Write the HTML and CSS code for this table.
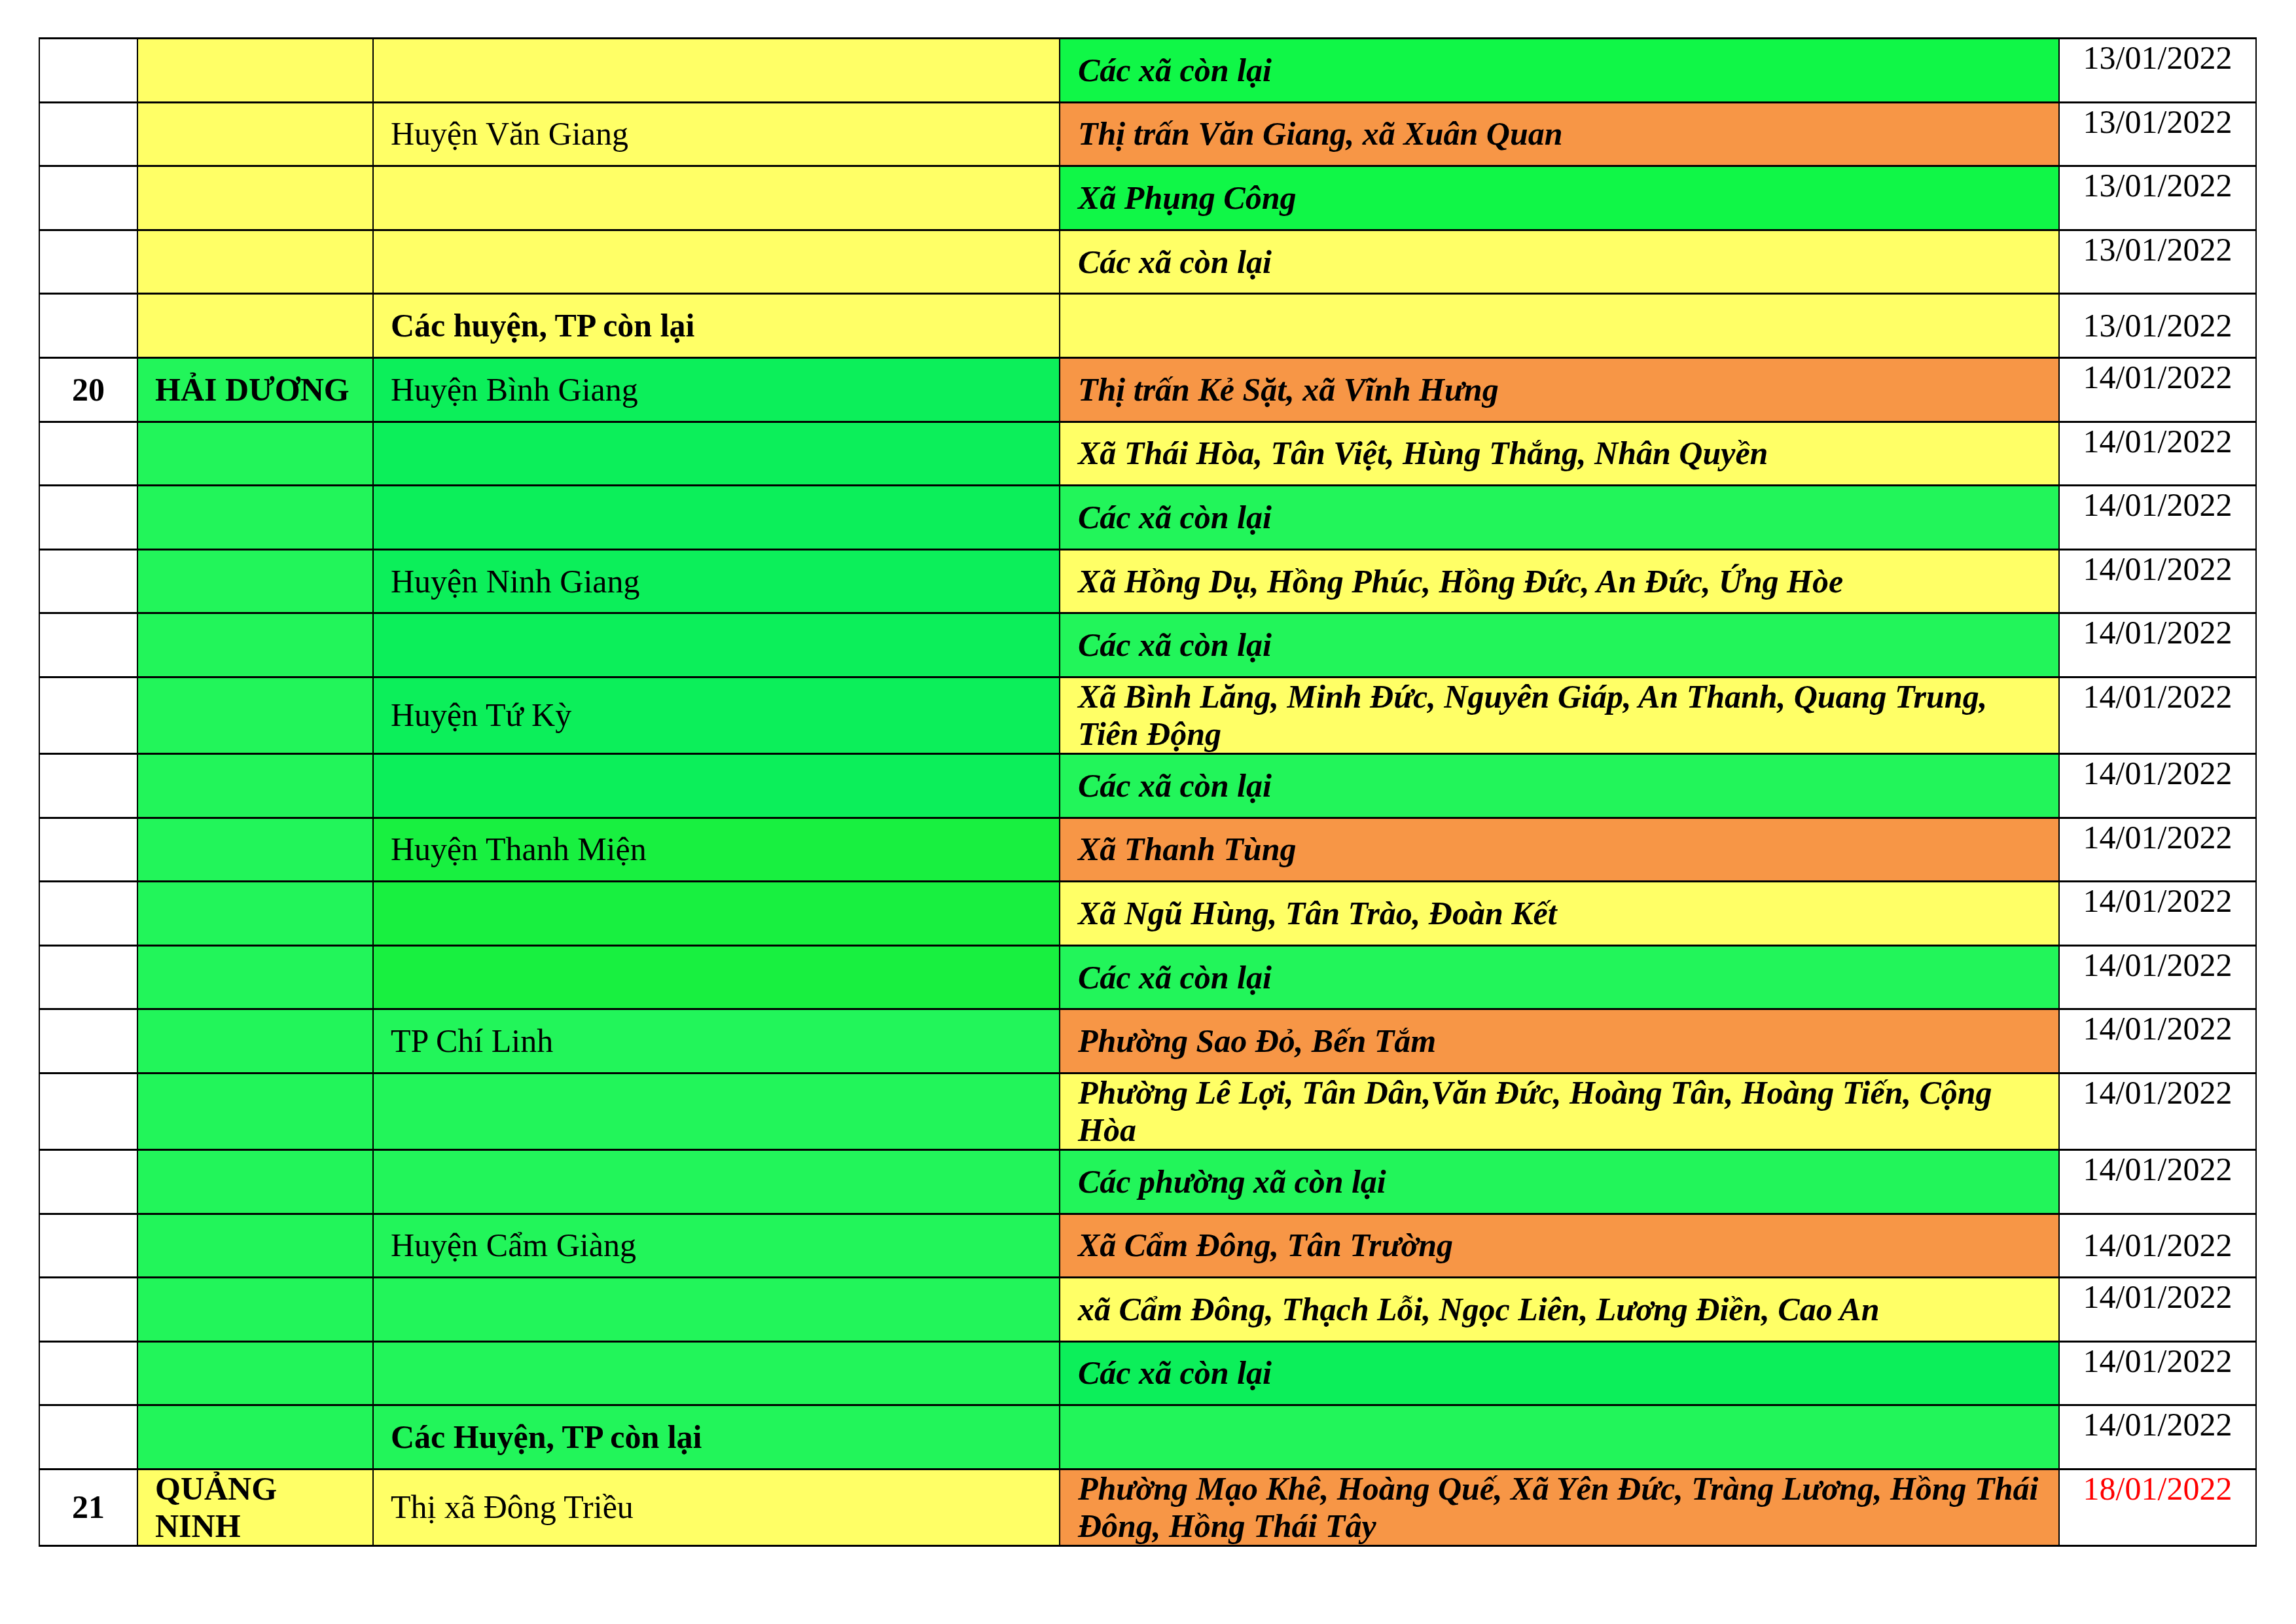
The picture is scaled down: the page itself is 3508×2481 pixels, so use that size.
FILE: index.html
```html
<!DOCTYPE html>
<html lang="vi">
<head>
<meta charset="utf-8">
<title>Danh sách</title>
<link rel="stylesheet" href="styles.css">
</head>
<body>
<table class="sheet">
<colgroup>
<col class="c-num"><col class="c-prov"><col class="c-dist"><col class="c-comm"><col class="c-date">
</colgroup>
<tbody>
<tr><td class="num"></td><td class="prov y"></td><td class="dist y"></td><td class="comm gb">Các xã còn lại</td><td class="date">13/01/2022</td></tr>
<tr><td class="num"></td><td class="prov y"></td><td class="dist y">Huyện Văn Giang</td><td class="comm o">Thị trấn Văn Giang, xã Xuân Quan</td><td class="date">13/01/2022</td></tr>
<tr><td class="num"></td><td class="prov y"></td><td class="dist y"></td><td class="comm gb">Xã Phụng Công</td><td class="date">13/01/2022</td></tr>
<tr><td class="num"></td><td class="prov y"></td><td class="dist y"></td><td class="comm y">Các xã còn lại</td><td class="date">13/01/2022</td></tr>
<tr><td class="num"></td><td class="prov y"></td><td class="dist y strong">Các huyện, TP còn lại</td><td class="comm y"></td><td class="date mid">13/01/2022</td></tr>
<tr><td class="num strong">20</td><td class="prov g strong">HẢI DƯƠNG</td><td class="dist gc">Huyện Bình Giang</td><td class="comm o">Thị trấn Kẻ Sặt, xã Vĩnh Hưng</td><td class="date">14/01/2022</td></tr>
<tr><td class="num"></td><td class="prov g"></td><td class="dist gc"></td><td class="comm y">Xã Thái Hòa, Tân Việt, Hùng Thắng, Nhân Quyền</td><td class="date">14/01/2022</td></tr>
<tr><td class="num"></td><td class="prov g"></td><td class="dist gc"></td><td class="comm g">Các xã còn lại</td><td class="date">14/01/2022</td></tr>
<tr><td class="num"></td><td class="prov g"></td><td class="dist gc">Huyện Ninh Giang</td><td class="comm y">Xã Hồng Dụ, Hồng Phúc, Hồng Đức, An Đức, Ứng Hòe</td><td class="date">14/01/2022</td></tr>
<tr><td class="num"></td><td class="prov g"></td><td class="dist gc"></td><td class="comm g">Các xã còn lại</td><td class="date">14/01/2022</td></tr>
<tr class="auto"><td class="num"></td><td class="prov g"></td><td class="dist gc">Huyện Tứ Kỳ</td><td class="comm y">Xã Bình Lăng, Minh Đức, Nguyên Giáp, An Thanh, Quang Trung, Tiên Động</td><td class="date">14/01/2022</td></tr>
<tr><td class="num"></td><td class="prov g"></td><td class="dist gc"></td><td class="comm g">Các xã còn lại</td><td class="date">14/01/2022</td></tr>
<tr><td class="num"></td><td class="prov g"></td><td class="dist gw">Huyện Thanh Miện</td><td class="comm o">Xã Thanh Tùng</td><td class="date">14/01/2022</td></tr>
<tr><td class="num"></td><td class="prov g"></td><td class="dist gw"></td><td class="comm y">Xã Ngũ Hùng, Tân Trào, Đoàn Kết</td><td class="date">14/01/2022</td></tr>
<tr><td class="num"></td><td class="prov g"></td><td class="dist gw"></td><td class="comm g">Các xã còn lại</td><td class="date">14/01/2022</td></tr>
<tr><td class="num"></td><td class="prov g"></td><td class="dist g">TP Chí Linh</td><td class="comm o">Phường Sao Đỏ, Bến Tắm</td><td class="date">14/01/2022</td></tr>
<tr class="auto"><td class="num"></td><td class="prov g"></td><td class="dist g"></td><td class="comm y">Phường Lê Lợi, Tân Dân,Văn Đức, Hoàng Tân, Hoàng Tiến, Cộng Hòa</td><td class="date">14/01/2022</td></tr>
<tr><td class="num"></td><td class="prov g"></td><td class="dist g"></td><td class="comm g">Các phường xã còn lại</td><td class="date">14/01/2022</td></tr>
<tr><td class="num"></td><td class="prov g"></td><td class="dist g">Huyện Cẩm Giàng</td><td class="comm o">Xã Cẩm Đông, Tân Trường</td><td class="date mid">14/01/2022</td></tr>
<tr><td class="num"></td><td class="prov g"></td><td class="dist g"></td><td class="comm y">xã Cẩm Đông, Thạch Lỗi, Ngọc Liên, Lương Điền, Cao An</td><td class="date">14/01/2022</td></tr>
<tr><td class="num"></td><td class="prov g"></td><td class="dist g"></td><td class="comm gc">Các xã còn lại</td><td class="date">14/01/2022</td></tr>
<tr><td class="num"></td><td class="prov g"></td><td class="dist g strong">Các Huyện, TP còn lại</td><td class="comm g"></td><td class="date">14/01/2022</td></tr>
<tr class="auto"><td class="num strong">21</td><td class="prov y strong top">QUẢNG NINH</td><td class="dist y">Thị xã Đông Triều</td><td class="comm o">Phường Mạo Khê, Hoàng Quế, Xã Yên Đức, Tràng Lương, Hồng Thái Đông, Hồng Thái Tây</td><td class="date red">18/01/2022</td></tr>
</tbody>
</table>
</body>
</html>
```

FILE: styles.css
```css
html, body {
  margin: 0;
  padding: 0;
  background: #ffffff;
}

body {
  font-family: "Liberation Serif", "Times New Roman", serif;
  font-size: 50px;
  color: #000000;
}

.sheet {
  margin: 57px 0 0 59px;
  border-collapse: collapse;
  table-layout: fixed;
  width: 3389px;
}

.c-num { width: 150px; }
.c-prov { width: 360px; }
.c-dist { width: 1049px; }
.c-comm { width: 1527px; }
.c-date { width: 301px; }

.sheet tr {
  height: 97.6px;
}

.sheet tr.auto {
  height: auto;
}

.sheet td {
  border-top: 3px solid #000;
  border-bottom: 3px solid #000;
  border-left: 2px solid #000;
  border-right: 2px solid #000;
  padding: 0;
  vertical-align: middle;
  line-height: 57px;
  background: #ffffff;
}

.num {
  text-align: center;
}

.sheet td.prov {
  padding-left: 26px;
  padding-right: 30px;
}

.sheet td.dist {
  padding-left: 26px;
}

.sheet td.comm {
  padding-left: 27px;
  padding-right: 22px;
  font-weight: bold;
  font-style: italic;
}

.sheet td.date {
  text-align: center;
  vertical-align: top;
}

.sheet td.date.mid {
  vertical-align: middle;
}

.sheet td.top {
  vertical-align: top;
}

.strong {
  font-weight: bold;
}

.red {
  color: #ff0000;
}

.sheet td.y { background: #ffff66; }
.sheet td.o { background: #f79646; }
.sheet td.g { background: #22f55a; }
.sheet td.gb { background: #10f747; }
.sheet td.gc { background: #0cef5a; }
.sheet td.gw { background: #18f040; }
```
